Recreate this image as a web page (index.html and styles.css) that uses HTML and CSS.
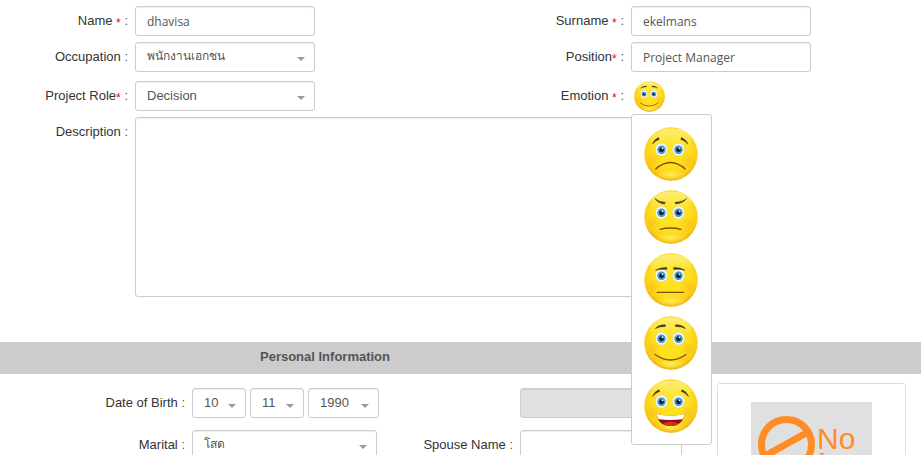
FILE: index.html
```html
<!DOCTYPE html>
<html lang="en">
 <head>
	<meta charset="UTF-8">
	<meta name="viewport" content="width=device-width, initial-scale=1">
	<title>Personal Information</title>
	<link rel="stylesheet" href="styles.css">
 </head>
 <body>
	<!-- shared parts of the faces -->
	<svg class="defs" width="0" height="0" aria-hidden="true">
		<defs>
			<radialGradient id="skin" cx="50%" cy="42%" r="58%">
				<stop offset="0" stop-color="#ffe619"/>
				<stop offset="0.6" stop-color="#fddf1e"/>
				<stop offset="0.85" stop-color="#fbcd17"/>
				<stop offset="1" stop-color="#eca90f"/>
			</radialGradient>
			<linearGradient id="shine" x1="0" y1="0" x2="0" y2="1">
				<stop offset="0" stop-color="#fffbc0" stop-opacity="0.6"/>
				<stop offset="1" stop-color="#fff27a" stop-opacity="0"/>
			</linearGradient>
			<radialGradient id="glow">
				<stop offset="0" stop-color="#fff56a" stop-opacity="0.8"/>
				<stop offset="1" stop-color="#fff04a" stop-opacity="0"/>
			</radialGradient>
			<radialGradient id="cheek">
				<stop offset="0" stop-color="#f6a318" stop-opacity="0.35"/>
				<stop offset="1" stop-color="#f6a318" stop-opacity="0"/>
			</radialGradient>
			<radialGradient id="iris">
				<stop offset="0.4" stop-color="#256c9c"/>
				<stop offset="0.75" stop-color="#4fa3d2"/>
				<stop offset="1" stop-color="#3d83ae"/>
			</radialGradient>
			<g id="eye">
				<ellipse rx="6.3" ry="6.700" fill="#d9cf86"/>
				<ellipse rx="5.9" ry="6.3" fill="#eef7fb"/>
				<circle cy="0.3" r="4.2" fill="url(#iris)"/>
				<circle cy="0.3" r="2.3" fill="#0b1c2b"/>
				<circle cx="1" cy="-1.2" r="0.9" fill="#fff"/>
			</g>
			<g id="head">
				<circle cx="27" cy="27" r="26.7" fill="url(#skin)"/>
				<ellipse cx="27" cy="12" rx="21" ry="10.5" fill="url(#shine)"/>
				<ellipse cx="27" cy="48" rx="17" ry="6" fill="url(#glow)"/>
				<circle cx="9" cy="33" r="8" fill="url(#cheek)"/>
				<circle cx="44" cy="33" r="8" fill="url(#cheek)"/>
				<use href="#eye" x="17.5" y="22.5"/>
				<use href="#eye" x="34.5" y="22.5"/>
			</g>
			<symbol id="smile" viewBox="0 0 54 54">
				<use href="#head"/>
				<path class="brow" d="M11.300 12.600Q15 8.500 21.500 8.900L21.300 10.500Q15.500 10.200 11.300 12.600ZM41.500 12.600Q37.800 8.500 31.300 8.900L31.500 10.500Q37.300 10.200 41.500 12.600Z"/>
				<path class="mouth" d="M11 38.500Q26.500 49.500 42 38.500"/>
			</symbol>
		</defs>
	</svg>

	<form class="page">
		<div class="general">
			<label class="label first" for="name">Name <b>*</b> <i>:</i></label>
			<input class="box" id="name" type="text" value="dhavisa">
			<label class="label" for="surname">Surname <b>*</b> <i>:</i></label>
			<input class="box" id="surname" type="text" value="ekelmans">

			<label class="label first" for="occupation">Occupation <i>:</i></label>
			<select class="box thai" id="occupation"><option>พนักงานเอกชน</option></select>
			<label class="label" for="position">Position<b>*</b> <i>:</i></label>
			<input class="box" id="position" type="text" value="Project Manager">

			<label class="label first low" for="role">Project Role<b>*</b> <i>:</i></label>
			<select class="box low" id="role"><option>Decision</option></select>
			<label class="label low" for="emotion">Emotion <b>*</b> <i>:</i></label>
			<div class="emotion low">
				<button class="current" id="emotion" type="button" aria-label="Smile">
					<svg width="31" height="31"><use href="#smile"/></svg>
				</button>
				<div class="menu">
					<button class="face" type="button" aria-label="Sad">
						<svg width="54" height="54" viewBox="0 0 54 54">
							<use href="#head"/>
							<path class="brow" d="M8.500 17Q10 12.500 14.500 10.500L15.200 12.300Q11.500 13.500 8.500 17ZM44 17Q42 12.500 37.500 10.500L36.800 12.300Q40.500 13.500 44 17Z"/>
							<path class="mouth" d="M11.700 42Q26.500 29 41.200 42"/>
						</svg>
					</button>
					<button class="face" type="button" aria-label="Angry">
						<svg width="54" height="54" viewBox="0 0 54 54">
							<use href="#head"/>
							<path class="brow" d="M11 8.500Q14.500 12 21.200 12.300L20.500 13.900Q13.500 13 11 8.500ZM42.500 8.500Q39 12 31 12.300L31.700 13.900Q39.500 13 42.500 8.500Z"/>
							<path class="mouth" d="M16 39.300Q26.500 36.700 37 39.300"/>
						</svg>
					</button>
					<button class="face" type="button" aria-label="Neutral">
						<svg width="54" height="54" viewBox="0 0 54 54">
							<use href="#head"/>
							<path class="brow" d="M11.500 17.200Q16 14.300 22.800 14.600L22.800 16.300Q16.500 15.700 11.500 17.200ZM41 17.200Q36.500 14.300 29.700 14.600L29.700 16.300Q36 15.700 41 17.200Z"/>
							<path class="mouth" d="M13.300 39.300H39.500"/>
						</svg>
					</button>
					<button class="face" type="button" aria-label="Smile">
						<svg width="54" height="54"><use href="#smile"/></svg>
					</button>
					<button class="face" type="button" aria-label="Laugh">
						<svg width="54" height="54" viewBox="0 0 54 54">
							<use href="#head"/>
							<path class="brow" d="M8.500 17.500Q10.500 12.500 15 10.800L15.700 12.300Q12 13.500 8.500 17.500ZM44.500 17.500Q42.500 12.500 38 10.800L37.300 12.300Q41 13.500 44.500 17.500Z"/>
							<path fill="#8c1010" d="M12.700 35Q26.500 38 40.500 35Q38.500 47 26.500 47T12.700 35Z"/>
							<path fill="#d82c1c" d="M19 44.500Q26.500 40.500 34.500 44.500Q31.500 47 26.500 47T19 44.500Z"/>
							<path fill="#fff" d="M12.700 35Q26.500 38 40.500 35Q40 38 38.500 40.300Q26.500 41.500 14.700 40.300Q13.100 38 12.700 35Z"/>
						</svg>
					</button>
				</div>
			</div>

			<label class="label first" for="description">Description <i>:</i></label>
			<textarea class="box description" id="description"></textarea>
		</div>

		<div class="bar"><h2>Personal Information</h2></div>

		<div class="personal">
			<label class="label" for="day">Date of Birth <i>:</i></label>
			<div class="dates">
				<select class="box day" id="day"><option>10</option></select>
				<select class="box day" aria-label="Month"><option>11</option></select>
				<select class="box year" aria-label="Year"><option>1990</option></select>
			</div>
			<input class="box age" type="text" aria-label="Age" disabled>
			<label class="label first" for="marital">Marital <i>:</i></label>
			<select class="box thai" id="marital"><option>โสด</option></select>
			<label class="label" for="spouse">Spouse Name <i>:</i></label>
			<input class="box" id="spouse" type="text">

			<div class="photo">
				<svg class="no-image" width="121" height="120" viewBox="0 0 121 120">
					<rect width="121" height="120" fill="#e0e0e0"/>
					<circle cx="35.500" cy="42.500" r="25" fill="none" stroke="#ff8c26" stroke-width="7"/>
					<path d="M14 54L57 30" stroke="#ff8c26" stroke-width="7"/>
					<text class="no" x="66" y="47">No</text>
					<text x="68" y="64" font-size="18">Image</text>
				</svg>
			</div>
		</div>
	</form>
 </body>
</html>
```

FILE: styles.css
```css
*{margin:0;padding:0;box-sizing:border-box;}

html{
	overflow:hidden;
}
body{
	background:#fff;
	color:#333;
	font-family:"Liberation Sans", Arial, "Noto Sans", sans-serif;
	font-size:13px;
	line-height:18px;
}

.defs{
	position:absolute;
}

/* top part: two label + field pairs */
.general{
	display:grid;
	grid-template-columns:135fr 180fr 316fr 180fr 110fr;
	row-gap:6px;
	padding-top:6px;
}
.label{
	padding:6px 7px 0 0;
	text-align:right;
	white-space:nowrap;
}
.first{
	grid-column:1;
}
.label b{
	color:#f00;
	font-size:12px;
	font-weight:normal;
	line-height:12px;
	vertical-align:-2px;
}
.label i{
	color:#555;
	font-style:normal;
}

/* fields */
.box{
	display:block;
	width:100%;
	min-width:0;
	height:30px;
	padding:0 11px;
	border:1px solid #ccc;
	border-radius:3px;
	background:#fff;
	box-shadow:inset 0 1px 1px rgba(0,0,0,0.075);
	color:#555;
	font-family:"Open Sans", "Noto Sans", sans-serif;
	font-size:12px;
}
select.box{
	appearance:none;
	padding-bottom:2px;
	background:#fff url("data:image/svg+xml,%3Csvg xmlns='http://www.w3.org/2000/svg' width='8' height='4'%3E%3Cpath d='M0 0h8L4 4z' fill='%23999'/%3E%3C/svg%3E") no-repeat right 9px top 14px;
	font-family:"Liberation Sans", Arial, "Noto Sans", sans-serif;
	font-size:13px;
}
select.thai{
	font-size:12px;
}
.low{
	margin-top:3px;
}
/* a bit wider than its columns, runs under the emotion menu */
textarea.box{
	grid-column:2 / 4;
	width:110%;
	height:180px;
	resize:none;
}
.description{
	padding:6px 11px;
}

/* emotion picker */
.emotion{
	position:relative;
	height:30px;
}
.emotion button{
	display:block;
	border:0;
	background:none;
	cursor:pointer;
}
.emotion svg{
	display:block;
}
.emotion .current{
	margin-left:3px;
}
.menu{
	position:absolute;
	z-index:1;
	top:33px;
	left:0;
	display:flex;
	flex-direction:column;
	gap:9px;
	padding:12px 13px 11px 12px;
	border:1px solid #ccc;
	border-radius:3px;
	background:#fff;
}
.brow{
	fill:#3f3510;
	stroke:#3f3510;
	stroke-width:0.5;
}
.mouth{
	fill:none;
	stroke:#8a4a0c;
	stroke-width:1.3;
	stroke-linecap:round;
}

/* section title */
.bar{
	display:grid;
	grid-template-columns:650fr 271fr;
	margin-top:45px;
	padding:6px 0 8px;
	background:#ccc;
}
.bar h2{
	color:#555;
	font-size:13px;
	line-height:18px;
	text-align:center;
}

/* personal part, photo on the right */
.personal{
	display:grid;
	grid-template-columns:192fr 185fr 143fr 162fr 35fr 189fr 15fr;
	grid-template-rows:30px 30px auto;
	row-gap:12px;
	padding-top:14px;
}
.dates{
	display:flex;
	gap:4px;
	min-width:0;
}
.dates .box{
	flex:none;
	background-position:right 9px top 15px;
}
.dates .day{
	width:54px;
}
.dates .year{
	width:71px;
}
.age{
	grid-column:4;
}
.age:disabled{
	background:#e0e0e0;
}
.photo{
	grid-column:6;
	grid-row:1 / 4;
	min-width:0;
	margin-top:-5px;
	padding:18px 0;
	border:1px solid #ddd;
	border-radius:3px;
	text-align:center;
}
.no-image text{
	fill:#ff8c26;
	font-family:"Noto Sans", sans-serif;
}
.no-image .no{
	font-family:"Liberation Sans", Arial, sans-serif;
	font-size:30px;
}
```
